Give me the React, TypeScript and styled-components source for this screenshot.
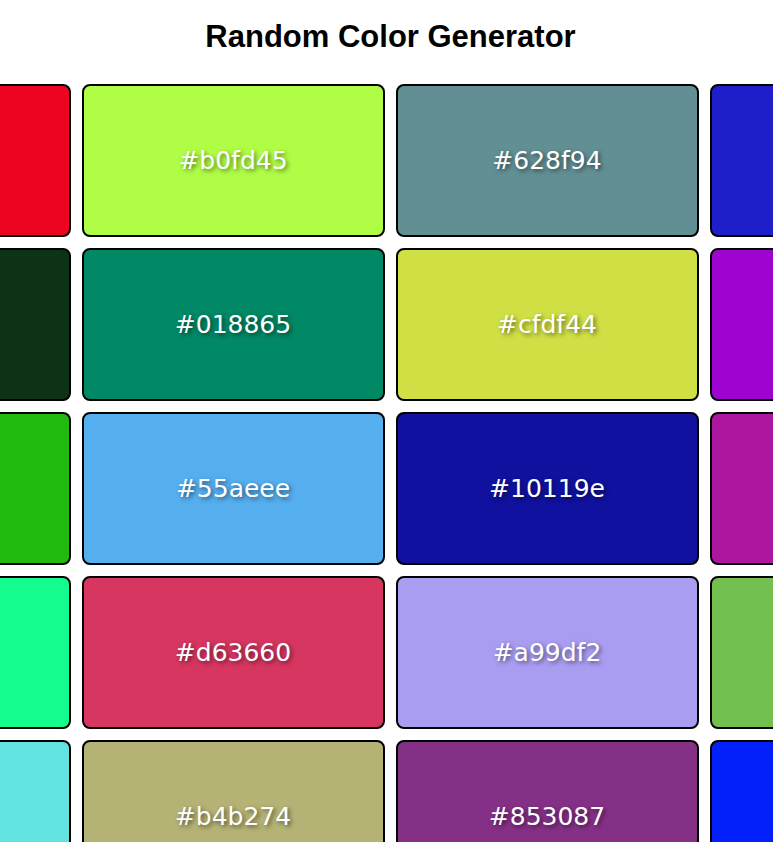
import React from "react";
import styled, { createGlobalStyle } from "styled-components";

const GlobalStyle = createGlobalStyle`
  html, body {
    margin: 0;
    padding: 0;
    background: #ffffff;
    overflow: hidden;
  }
  body {
    font-family: "Comic Sans MS", "DejaVu Sans", sans-serif;
  }
`;

const Page = styled.div`
  width: 773px;
  height: 842px;
  overflow: hidden;
  display: flex;
  flex-direction: column;
`;

const Title = styled.h1`
  flex: 0 0 84px;
  margin: 0;
  padding: 19px 0 0 8px;
  box-sizing: border-box;
  text-align: center;
  font-family: "Comic Sans MS", "Liberation Sans", sans-serif;
  font-size: 31px;
  font-weight: bold;
  color: #000;
`;

const Grid = styled.div`
  flex: 0 0 auto;
  display: grid;
  grid-template-columns: repeat(4, 303px);
  grid-auto-rows: 153px;
  gap: 11px;
  justify-content: center;
  padding-left: 7px;
`;

const Swatch = styled.div<{ $bg: string }>`
  box-sizing: border-box;
  background: ${(p) => p.$bg};
  border: 2px solid #000;
  border-radius: 8px;
  display: flex;
  align-items: center;
  justify-content: center;
  color: #fff;
  font-size: 25px;
  text-shadow: 2px 2px 4px rgba(0, 0, 0, 0.5);
`;

const rows: [string, string, string, string][] = [
  ["#ec0420", "#b0fd45", "#628f94", "#1f1ecb"],
  ["#0c3316", "#018865", "#cfdf44", "#9e04cf"],
  ["#21bb10", "#55aeee", "#10119e", "#ad169e"],
  ["#14fc8e", "#d63660", "#a99df2", "#72c050"],
  ["#63e3e0", "#b4b274", "#853087", "#0320fb"],
];

export default function App() {
  return (
    <Page>
      <GlobalStyle />
      <Title>Random Color Generator</Title>
      <Grid>
        {rows.flat().map((c, i) => (
          <Swatch key={i} $bg={c}>
            {c}
          </Swatch>
        ))}
      </Grid>
    </Page>
  );
}
